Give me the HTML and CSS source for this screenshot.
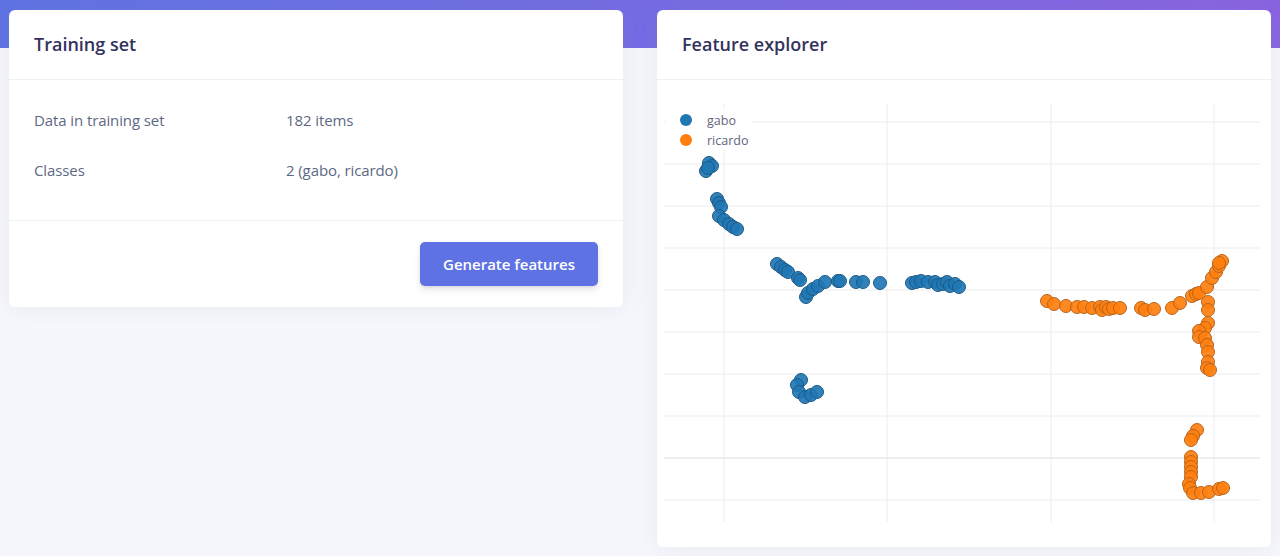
FILE: index.html
```html
<!DOCTYPE html>
<html lang="en">
<head>
<meta charset="utf-8">
<title>Training set</title>
<link rel="stylesheet" href="styles.css">
</head>
<body>
<main class="page">
  <section class="card card-training">
    <header class="card-header"><h3 class="card-title">Training set</h3></header>
    <div class="card-body">
      <div class="info-row"><span class="info-label">Data in training set</span><span class="info-value">182 items</span></div>
      <div class="info-row"><span class="info-label">Classes</span><span class="info-value">2 (gabo, ricardo)</span></div>
    </div>
    <footer class="card-footer"><button class="btn-primary" type="button">Generate features</button></footer>
  </section>

  <section class="card card-explorer">
    <header class="card-header"><h3 class="card-title">Feature explorer</h3></header>
    <div class="chart-wrap">
      <svg class="chart" width="614" height="467" viewBox="657 80 614 467" xmlns="http://www.w3.org/2000/svg">
        <g class="grid">
          <line x1="724" y1="104" x2="724" y2="522"/>
          <line x1="887" y1="104" x2="887" y2="522"/>
          <line x1="1051" y1="104" x2="1051" y2="522"/>
          <line x1="1214" y1="104" x2="1214" y2="522"/>
          <line x1="664" y1="122" x2="1260" y2="122"/>
          <line x1="664" y1="164" x2="1260" y2="164"/>
          <line x1="664" y1="206" x2="1260" y2="206"/>
          <line x1="664" y1="248" x2="1260" y2="248"/>
          <line x1="664" y1="290" x2="1260" y2="290"/>
          <line x1="664" y1="332" x2="1260" y2="332"/>
          <line x1="664" y1="374" x2="1260" y2="374"/>
          <line x1="664" y1="416" x2="1260" y2="416"/>
          <line class="zero" x1="664" y1="458" x2="1260" y2="458"/>
          <line x1="664" y1="500" x2="1260" y2="500"/>
        </g>
        <rect class="legend-bg" x="666" y="109" width="86" height="41"/>
        <g class="pts gabo">
          <circle cx="709" cy="163" r="6"/><circle cx="712" cy="166" r="6"/><circle cx="706" cy="171" r="6"/><circle cx="708" cy="168" r="6"/>
          <circle cx="717" cy="199" r="6"/><circle cx="719" cy="203" r="6"/><circle cx="721" cy="207" r="6"/><circle cx="719" cy="216" r="6"/><circle cx="724" cy="220" r="6"/><circle cx="729" cy="224" r="6"/><circle cx="733" cy="227" r="6"/><circle cx="737" cy="229" r="6"/>
          <circle cx="777" cy="264" r="6"/><circle cx="781" cy="267" r="6"/><circle cx="785" cy="270" r="6"/><circle cx="788" cy="272" r="6"/><circle cx="798" cy="278" r="6"/><circle cx="800" cy="280" r="6"/><circle cx="806" cy="297" r="6"/><circle cx="808" cy="293" r="6"/><circle cx="813" cy="289" r="6"/><circle cx="818" cy="286" r="6"/><circle cx="825" cy="282" r="6"/><circle cx="838" cy="281" r="6"/><circle cx="840" cy="281" r="6"/><circle cx="856" cy="282" r="6"/><circle cx="863" cy="282" r="6"/><circle cx="880" cy="283" r="6"/>
          <circle cx="912" cy="283" r="6"/><circle cx="916" cy="282" r="6"/><circle cx="921" cy="281" r="6"/><circle cx="928" cy="282" r="6"/><circle cx="935" cy="282" r="6"/><circle cx="938" cy="285" r="6"/><circle cx="943" cy="284" r="6"/><circle cx="947" cy="282" r="6"/><circle cx="950" cy="286" r="6"/><circle cx="955" cy="284" r="6"/><circle cx="959" cy="287" r="6"/>
          <circle cx="801" cy="380" r="6"/><circle cx="797" cy="385" r="6"/><circle cx="799" cy="392" r="6"/><circle cx="805" cy="397" r="6"/><circle cx="811" cy="395" r="6"/><circle cx="817" cy="392" r="6"/>
        </g>
        <g class="pts ricardo">
          <circle cx="1047" cy="301" r="6"/><circle cx="1054" cy="304" r="6"/><circle cx="1066" cy="306" r="6"/><circle cx="1077" cy="307" r="6"/><circle cx="1084" cy="307" r="6"/><circle cx="1092" cy="308" r="6"/><circle cx="1100" cy="307" r="6"/><circle cx="1102" cy="310" r="6"/><circle cx="1106" cy="307" r="6"/><circle cx="1109" cy="309" r="6"/><circle cx="1113" cy="308" r="6"/><circle cx="1120" cy="308" r="6"/><circle cx="1141" cy="308" r="6"/><circle cx="1145" cy="310" r="6"/><circle cx="1154" cy="309" r="6"/>
          <circle cx="1172" cy="308" r="6"/><circle cx="1180" cy="303" r="6"/><circle cx="1192" cy="296" r="6"/><circle cx="1196" cy="294" r="6"/><circle cx="1199" cy="293" r="6"/><circle cx="1207" cy="287" r="6"/><circle cx="1212" cy="278" r="6"/><circle cx="1216" cy="272" r="6"/><circle cx="1219" cy="266" r="6"/><circle cx="1222" cy="261" r="6"/><circle cx="1219" cy="263" r="6"/>
          <circle cx="1208" cy="302" r="6"/><circle cx="1208" cy="310" r="6"/><circle cx="1208" cy="323" r="6"/><circle cx="1205" cy="328" r="6"/><circle cx="1199" cy="331" r="6"/><circle cx="1199" cy="337" r="6"/><circle cx="1205" cy="338" r="6"/><circle cx="1207" cy="345" r="6"/><circle cx="1208" cy="352" r="6"/><circle cx="1208" cy="362" r="6"/><circle cx="1207" cy="368" r="6"/><circle cx="1210" cy="370" r="6"/>
          <circle cx="1197" cy="430" r="6"/><circle cx="1193" cy="436" r="6"/><circle cx="1191" cy="440" r="6"/>
          <circle cx="1191" cy="457" r="6"/><circle cx="1191" cy="462" r="6"/><circle cx="1191" cy="467" r="6"/><circle cx="1191" cy="472" r="6"/><circle cx="1191" cy="477" r="6"/><circle cx="1189" cy="484" r="6"/><circle cx="1190" cy="488" r="6"/><circle cx="1193" cy="493" r="6"/><circle cx="1201" cy="493" r="6"/><circle cx="1209" cy="492" r="6"/><circle cx="1219" cy="489" r="6"/><circle cx="1223" cy="488" r="6"/>
        </g>
        <g class="legend">
          <circle class="lg-gabo" cx="686" cy="120" r="6"/>
          <text x="707" y="124.5">gabo</text>
          <circle class="lg-ricardo" cx="686" cy="140" r="6"/>
          <text x="707" y="144.5">ricardo</text>
        </g>
      </svg>
    </div>
  </section>
</main>
</body>
</html>
```

FILE: styles.css
```css
* { box-sizing: border-box; }

html, body { margin: 0; padding: 0; }

body {
  font-family: "Open Sans", "Noto Sans", sans-serif;
  color: #525f7f;
  background: linear-gradient(87deg, #5e72e4 0%, #8a62e2 100%) top left / 100% 48px no-repeat, #f6f7fc;
  min-height: 556px;
}

.page {
  display: flex;
  align-items: flex-start;
  gap: 34px;
  padding: 10px 9px 0 9px;
}

.card {
  width: 614px;
  background: #fff;
  border-radius: 6px;
  box-shadow: 0 0 24px rgba(136, 152, 170, 0.15);
}

.card-header {
  padding: 22px 25px;
  border-bottom: 1px solid #eef0f5;
}

.card-title {
  margin: 0;
  font-size: 18px;
  line-height: 25px;
  font-weight: 600;
  color: #32325d;
}

.card-body {
  padding: 15px 25px 25px;
  border-bottom: 1px solid #eef0f5;
}

.info-row {
  display: grid;
  grid-template-columns: 252px 1fr;
  height: 50px;
  align-items: center;
  font-size: 15px;
  color: #5d6984;
  letter-spacing: -0.1px;
}

.card-footer {
  display: flex;
  justify-content: flex-end;
  padding: 21px 25px;
}

.btn-primary {
  height: 44px;
  width: 178px;
  border: 0;
  border-radius: 5px;
  background: #5e72e4;
  color: #fff;
  font-family: "Open Sans", "Noto Sans", sans-serif;
  font-size: 15px;
  font-weight: 600;
  box-shadow: 0 4px 6px rgba(50, 50, 93, 0.11), 0 1px 3px rgba(0, 0, 0, 0.08);
}

.chart-wrap {
  height: 467px;
}

.chart {
  display: block;
}

.grid line {
  stroke: #ececef;
  stroke-width: 1;
}

.grid line.zero {
  stroke: #e8e8ec;
  stroke-width: 1.5;
}

.legend-bg { fill: #fff; }

.pts circle {
  r: 6.5px;
  stroke-width: 1;
}

.gabo circle {
  fill: #1f77b4;
  fill-opacity: 0.92;
  stroke: #1c5a86;
}

.ricardo circle {
  fill: #ff7f0e;
  fill-opacity: 0.92;
  stroke: #b8641c;
}

.legend text {
  font-family: "Open Sans", "Noto Sans", sans-serif;
  font-size: 12.5px;
  fill: #62657d;
}

.lg-gabo { fill: #1f77b4; }
.lg-ricardo { fill: #ff7f0e; }
```
